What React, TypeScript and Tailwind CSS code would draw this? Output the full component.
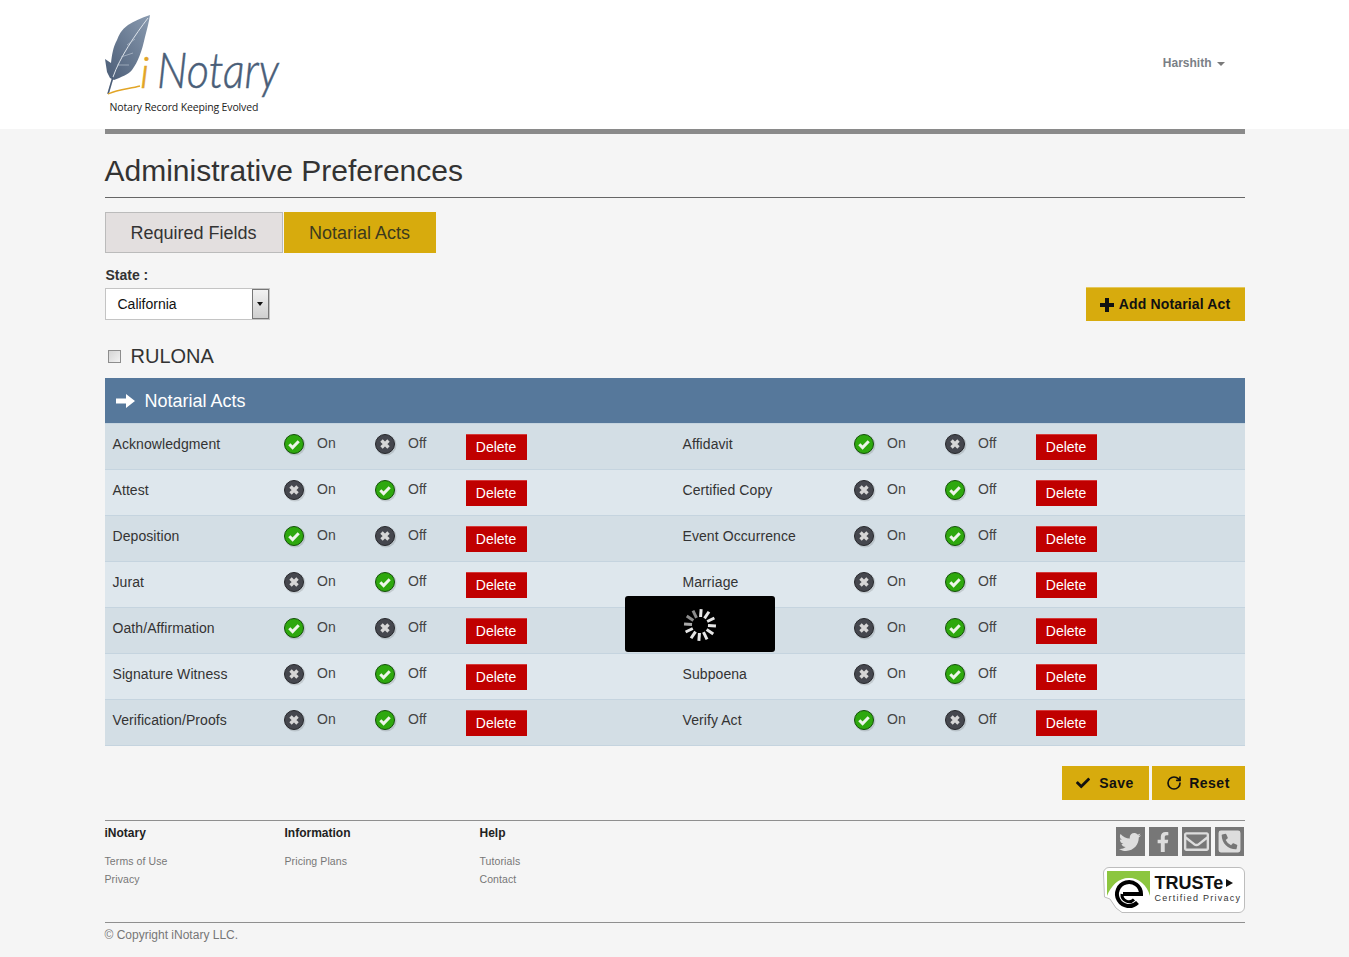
import { RotateCw } from 'lucide-react';
import { FaCheck, FaFacebookF, FaPhoneSquareAlt, FaRegEnvelope, FaTwitter } from 'react-icons/fa';

const acts: [string, boolean, string | null, boolean][] = [
  ['Acknowledgment', true, 'Affidavit', true],
  ['Attest', false, 'Certified Copy', false],
  ['Deposition', true, 'Event Occurrence', false],
  ['Jurat', false, 'Marriage', false],
  ['Oath/Affirmation', true, null, false],
  ['Signature Witness', false, 'Subpoena', false],
  ['Verification/Proofs', false, 'Verify Act', true]
];

function Logo() {
  return (
    <svg width="210" height="88" viewBox="0 0 210 88" className="block">
      <defs>
        <linearGradient id="feather" x1="1" y1="0" x2="0" y2="1">
          <stop offset="0" stopColor="#8a9bb0" />
          <stop offset="1" stopColor="#4a5c76" />
        </linearGradient>
      </defs>
      <path
        d="M45 0 C36 3 29 6 23 10 C16 15 14 20 12 25 C8 32 7 40 6 48 L0 44 L2 57 L5 63 L9 65 C16 62 23 60 27 55 C33 47 37 36 40 22 C42 14 44 7 45 0 Z"
        fill="url(#feather)"
      />
      <path d="M43 3 C30 20 15 42 8 62 L3 78" fill="none" stroke="#dfe5ec" strokeWidth="1" />
      <path d="M22 30 L30 24 M16 42 L28 38 M12 50 L24 50" fill="none" stroke="#c3ccd8" strokeWidth="0.6" />
      <path d="M8 62 L3 79" fill="none" stroke="#4a5c76" strokeWidth="1.6" />
      <path d="M3 79 C14 74 24 74 35 71" fill="none" stroke="#e2a526" strokeWidth="1.3" />
      <text
        x="35"
        y="73"
        fontFamily="Lato, sans-serif"
        fontStyle="italic"
        fontWeight="300"
        fontSize="44"
        fill="#e2a526"
        stroke="#e2a526"
        strokeWidth="0.5"
      >
        i
      </text>
      <text
        x="52"
        y="73"
        fontFamily="Lato, sans-serif"
        fontStyle="italic"
        fontWeight="300"
        fontSize="50"
        fill="#4a5e78"
        stroke="#4a5e78"
        strokeWidth="0.5"
        textLength="122"
        lengthAdjust="spacingAndGlyphs"
      >
        Notary
      </text>
    </svg>
  );
}

function Toggle({ on }: { on: boolean }) {
  return (
    <svg width="24" height="24" viewBox="0 0 24 24" className="-mr-1 -mb-1 block">
      <circle cx="11" cy="11" r="10.5" fill="#000" opacity="0.12" />
      <circle cx="10" cy="10" r="9.5" fill={on ? '#2ea80e' : '#45474e'} stroke={on ? '#14500a' : '#27282c'} />
      {on ? (
        <path d="M5.3 10.2 L8.6 13.5 L14.7 7.2" fill="none" stroke="#eef5ea" strokeWidth="3" />
      ) : (
        <path d="M6.5 6.5 L13.5 13.5 M13.5 6.5 L6.5 13.5" fill="none" stroke="#d6d6d6" strokeWidth="3.4" />
      )}
    </svg>
  );
}

function ActCell({ name, on }: { name: string | null; on: boolean }) {
  return (
    <div className="flex h-full w-[570px] items-start">
      <div className="w-[179px] pt-[12px] pl-2 text-[14px] leading-4 tracking-[0.08px] text-[#333]">{name}</div>
      <div className="flex w-[91px] pt-[10px]">
        <Toggle on={on} />
        <span className="-mt-[1px] ml-[13.5px] text-[14px] leading-5 text-[#444]">On</span>
      </div>
      <div className="flex w-[91px] pt-[10px]">
        <Toggle on={!on} />
        <span className="-mt-[1px] ml-[13.5px] text-[14px] leading-5 text-[#444]">Off</span>
      </div>
      <button
        type="button"
        className="mt-[10px] h-[26px] w-[61px] border-t border-t-[#d43a3a] bg-[#c00000] text-[14px] text-white"
      >
        Delete
      </button>
    </div>
  );
}

function Spinner() {
  const spokes = Array.from({ length: 12 }, (_, i) => i);
  return (
    <svg width="36" height="36" viewBox="-18 -18 36 36">
      {spokes.map((i) => (
        <rect
          key={i}
          x="-1.5"
          y="-16"
          width="3"
          height="8"
          fill={i === 10 || i === 11 ? '#8c8c8c' : i === 9 ? '#a8a8a8' : '#e6e6e6'}
          transform={`rotate(${i * 30 + 4})`}
        />
      ))}
    </svg>
  );
}

function TrusteBadge() {
  return (
    <div className="relative h-[46px] w-[142px]">
      <svg width="142" height="46" viewBox="0 0 142 46" className="absolute top-0 left-0">
        <path
          d="M6 .5 H136 A5.5 5.5 0 0 1 141.5 6 V40 A5.5 5.5 0 0 1 136 45.5 H19 L13 41 L7 32 L1.5 30 L.5 6 A5.5 5.5 0 0 1 6 .5 Z"
          fill="#fff"
          stroke="#bdbdbd"
        />
        <path d="M4 4 H47 V29 C44 18 36 11 26 11 C15 11 8 19 4 29 Z" fill="#8cc63f" />
        <circle cx="26" cy="27" r="15.5" fill="#fff" />
        <path d="M34.5 35.5 A12 12 0 1 1 38 27 H20" fill="none" stroke="#000" strokeWidth="4" />
        <path d="M31 32.5 A7 7 0 0 1 19 27" fill="none" stroke="#000" strokeWidth="3" />
      </svg>
      <div className="absolute top-[6px] left-[52px] flex items-center text-[18px] leading-5 font-bold text-[#111]">
        TRUSTe
        <span className="ml-[3px] h-0 w-0 border-y-[4px] border-l-[7px] border-y-transparent border-l-[#111]" />
      </div>
      <div className="absolute top-[25px] left-[52px] text-[9px] leading-3 tracking-[1.25px] text-[#333]">
        Certified Privacy
      </div>
    </div>
  );
}

function FooterColumn({ title, links, width }: { title: string; links: string[]; width: string }) {
  return (
    <div className={width}>
      <p className="text-[12px] leading-4 font-bold text-[#222]">{title}</p>
      <div className="mt-[12px]">
        {links.map((link) => (
          <p key={link} className="-mt-px mb-px text-[10.5px] leading-[18px] tracking-[0.1px] text-[#777]">
            {link}
          </p>
        ))}
      </div>
    </div>
  );
}

export default function App() {
  return (
    <div className="min-h-[957px] bg-[#f5f5f5] font-['Liberation_Sans',Arial,sans-serif]">
      <header className="h-[129px] bg-white">
        <div className="mx-auto flex h-full w-[1140px] justify-between">
          <div className="pt-[15px]">
            <div className="h-[86px]">
              <Logo />
            </div>
            <p className="pl-[5px] font-['Open_Sans',sans-serif] text-[10.5px] leading-3 tracking-[-0.15px] text-[#222]">
              Notary Record Keeping Evolved
            </p>
          </div>
          <div className="flex items-start pt-[55px] pr-5 text-[12px] leading-4 font-bold text-[#7a7f86]">
            Harshith
            <span className="mt-[7px] ml-[5px] h-0 w-0 border-x-[4px] border-t-[4px] border-x-transparent border-t-[#7a7a7a]" />
          </div>
        </div>
      </header>

      <main className="mx-auto w-[1140px]">
        <div className="h-[5px] bg-[#8a8a8a]" />
        <h1 className="flex h-[64px] items-end border-b border-[#666] pb-[8px] text-[30px] leading-9 text-[#333]">
          Administrative Preferences
        </h1>

        <div className="mt-[14px] flex h-[41px] gap-px">
          <button
            type="button"
            className="w-[178px] border border-[#bbb] bg-[#e3dfdf] pt-[2px] text-[18px] text-[#333]"
          >
            Required Fields
          </button>
          <button type="button" className="w-[152px] bg-[#d7ab0d] pt-[2px] text-[18px] text-[#3c3a1e]">
            Notarial Acts
          </button>
        </div>

        <p className="mt-[12px] pl-px text-[14px] leading-5 font-bold text-[#333]">State :</p>
        <div className="mt-[3px] flex items-start justify-between">
          <div className="flex h-[32px] w-[165px] items-center justify-between border border-[#c4c4c4] bg-white pl-3">
            <span className="text-[14px] text-[#111]">California</span>
            <span className="flex h-[30px] w-[17px] items-center justify-center border border-[#777] bg-[linear-gradient(#f2f2f2,#cfcfcf)]">
              <span className="h-0 w-0 border-x-[3.5px] border-t-[4px] border-x-transparent border-t-[#111]" />
            </span>
          </div>
          <button
            type="button"
            className="-mt-px flex h-[34px] w-[159px] items-center justify-center gap-[5px] border-t border-t-[#e4c85c] bg-[#d7ab0d] text-[14px] font-bold tracking-[0.15px] text-[#111]"
          >
            <svg width="14" height="14" viewBox="0 0 14 14">
              <path d="M5 0 H9 V5 H14 V9 H9 V14 H5 V9 H0 V5 H5 Z" fill="#111" />
            </svg>
            Add Notarial Act
          </button>
        </div>

        <div className="mt-[21px] flex h-[28px] items-center">
          <span className="ml-[3px] h-[13px] w-[13px] border border-[#8d8d8d] bg-[linear-gradient(135deg,#d4d4d4,#f2f2f2)]" />
          <span className="ml-[10px] text-[20px] leading-6 text-[#333]">RULONA</span>
        </div>

        <div className="relative mt-[8px]">
          <div className="flex h-[45px] items-center bg-[#56789b] pt-[2px] pl-[11px] text-[18px] text-white">
            <svg width="19" height="14" viewBox="0 0 19 14" className="-mt-[2px]">
              <path d="M0 4.5 H10 V0 L19 7 L10 14 V9.5 H0 Z" fill="#fff" />
            </svg>
            <span className="ml-[10px]">Notarial Acts</span>
          </div>
          {acts.map(([left, leftOn, right, rightOn], i) => (
            <div
              key={left}
              className={`flex border-t border-[#c5d4df] ${i === acts.length - 1 ? 'h-[47px] border-b' : 'h-[46px]'} ${i % 2 === 0 ? 'bg-[#d3dee5]' : 'bg-[#dee7ed]'}`}
            >
              <ActCell name={left} on={leftOn} />
              <ActCell name={right} on={rightOn} />
            </div>
          ))}
          <div className="absolute top-[218px] left-[520px] flex h-[56px] w-[150px] items-center justify-center rounded-[3px] bg-black pt-[2px]">
            <Spinner />
          </div>
        </div>

        <div className="mt-[20px] flex justify-end gap-[3px]">
          <button
            type="button"
            className="flex h-[34px] w-[87px] items-center justify-center gap-[9px] bg-[#d7ab0d] text-[14px] font-bold tracking-[0.5px] text-[#111]"
          >
            <FaCheck size={14} />
            Save
          </button>
          <button
            type="button"
            className="flex h-[34px] w-[93px] items-center justify-center gap-[7px] bg-[#d7ab0d] text-[14px] font-bold tracking-[0.5px] text-[#111]"
          >
            <RotateCw size={16} strokeWidth={2.5} />
            Reset
          </button>
        </div>

        <footer className="mt-[20px] flex h-[102px] justify-between border-t border-[#8f8f8f] pt-[4px]">
          <div className="flex">
            <FooterColumn title="iNotary" links={['Terms of Use', 'Privacy']} width="w-[180px]" />
            <FooterColumn title="Information" links={['Pricing Plans']} width="w-[195px]" />
            <FooterColumn title="Help" links={['Tutorials', 'Contact']} width="w-[100px]" />
          </div>
          <div className="flex flex-col items-end">
            <div className="mt-[2px] flex gap-[4px] pr-px">
              <span className="flex h-[29px] w-[29px] items-center justify-center bg-[#777] text-[#ddd]">
                <FaTwitter size={22} />
              </span>
              <span className="flex h-[29px] w-[29px] items-center justify-center bg-[#777] text-[#ddd]">
                <FaFacebookF size={20} />
              </span>
              <span className="flex h-[29px] w-[29px] items-center justify-center bg-[#777] text-[#ddd]">
                <FaRegEnvelope size={25} />
              </span>
              <span className="flex h-[29px] w-[29px] items-center justify-center bg-[#777] text-[#ddd]">
                <FaPhoneSquareAlt size={25} />
              </span>
            </div>
            <div className="mt-[11px]">
              <TrusteBadge />
            </div>
          </div>
        </footer>
        <div className="border-t border-[#8f8f8f] pt-[4px] text-[12px] leading-4 text-[#777]">
          © Copyright iNotary LLC.
        </div>
      </main>
    </div>
  );
}
